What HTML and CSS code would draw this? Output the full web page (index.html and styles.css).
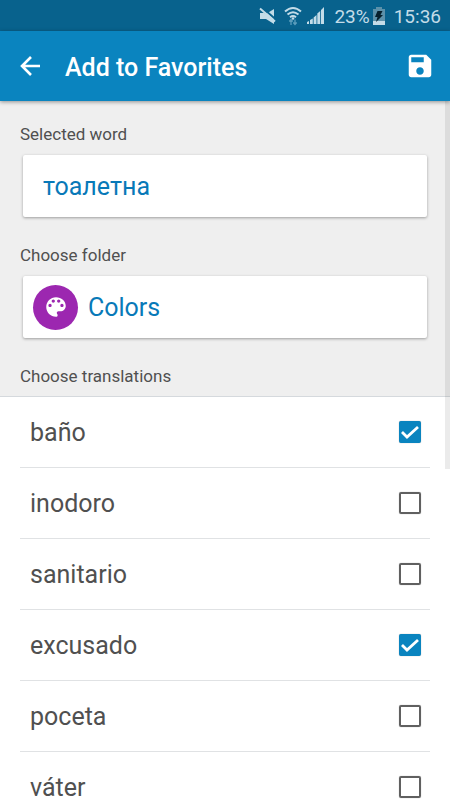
FILE: index.html
```html
<!DOCTYPE html>
<html lang="en">
<head>
<meta charset="utf-8">
<meta name="viewport" content="width=device-width, initial-scale=1">
<title>Add to Favorites</title>
<link rel="stylesheet" href="styles.css">
</head>
<body>
<div class="screen">
  <div class="status">
    <svg class="status-mute" width="18" height="18" viewBox="0 0 18 18" aria-hidden="true">
      <path d="M1 6h4l2 1 8-5v15l-8-5H1z" fill="currentColor"/>
      <path d="M2 -.500l16 14" stroke="#08628d" stroke-width="2"/>
      <path d="M1 1.500l15 13" stroke="currentColor" stroke-width="2"/>
    </svg>
    <svg class="status-wifi" width="18" height="20" viewBox="0 0 18 20" aria-hidden="true">
      <g fill="none" stroke="currentColor" stroke-width="2">
        <path d="M1 5.500Q9-1.500 17 5.500M3.500 8.500q5.500-4.500 11 0M6 11.200q3-2.400 6 0"/>
      </g>
      <circle cx="9" cy="12.500" r="1.300" fill="currentColor"/>
      <path d="M7 19v-5M5.300 15.500L7 13.500l1.700 2M11 13.500v5M9.300 16.500l1.700 2 1.700-2" fill="none" stroke="#5c9dbc" stroke-width="1.300"/>
    </svg>
    <svg class="status-signal" width="17" height="17" viewBox="0 0 17 17" aria-hidden="true">
      <path d="M0 17v-2l2-1v3zM3 17v-4l2.800-1.600V17zM6.600 17v-6.500L9.500 8v9zM10.300 17V6.500L13.200 4v13zM14 17V3l3-3v17z" fill="currentColor"/>
    </svg>
    <span class="status-percent">23%</span>
    <svg class="status-battery" width="12" height="18" viewBox="0 0 12 18" aria-hidden="true">
      <path d="M0 2h3V0h6v2h3v12H0z" fill="#5c91aa"/>
      <path d="M0 14h12v4H0z" fill="currentColor"/>
      <path d="M4.500 4h5L7.500 8H10l-7 7 1.500-5H2z" fill="#07202c"/>
    </svg>
    <span class="status-time">15:36</span>
  </div>
  <header class="toolbar">
    <button class="icon-button" type="button" aria-label="Back">
      <svg width="20" height="20" viewBox="0 0 20 20"><path d="M20 10H2M11 1l-9 9 9 9" fill="none" stroke="currentColor" stroke-width="2.600"/></svg>
    </button>
    <h1 class="title">Add to Favorites</h1>
    <button class="icon-button" type="submit" form="favorite" aria-label="Save">
      <svg width="30" height="30" viewBox="0 0 24 24"><path fill="currentColor" d="M17 3H5c-1.110 0-2 .900-2 2v14c0 1.100.890 2 2 2h14c1.100 0 2-.900 2-2V7l-4-4zm-5 16c-1.660 0-3-1.340-3-3s1.340-3 3-3 3 1.340 3 3-1.340 3-3 3zm3-10H5V5h10v4z"/></svg>
    </button>
  </header>
  <form class="content" id="favorite">
    <div class="fields">
      <div class="field">
        <label class="label" for="word">Selected word</label>
        <input class="card word" id="word" type="text" value="тоалетна" lang="bg">
      </div>
      <div class="field">
        <label class="label" for="folder">Choose folder</label>
        <button class="card folder" id="folder" type="button">
          <span class="folder-icon">
            <svg width="26" height="26" viewBox="0 0 24 24" aria-hidden="true"><path fill="currentColor" d="M12 3c-4.970 0-9 4.030-9 9s4.030 9 9 9c.830 0 1.500-.670 1.500-1.500 0-.390-.150-.740-.390-1.010-.230-.260-.380-.610-.380-.990 0-.830.670-1.500 1.500-1.500H16c2.760 0 5-2.240 5-5 0-4.420-4.030-8-9-8zm-5.500 9c-.830 0-1.500-.670-1.500-1.500S5.670 9 6.500 9 8 9.670 8 10.500 7.330 12 6.500 12zm3-4C8.670 8 8 7.330 8 6.500S8.670 5 9.500 5s1.500.670 1.500 1.500S10.330 8 9.500 8zm5 0c-.830 0-1.500-.670-1.500-1.500S13.670 5 14.500 5s1.500.670 1.500 1.500S15.330 8 14.500 8zm3 4c-.830 0-1.500-.670-1.500-1.500S16.670 9 17.500 9s1.500.670 1.500 1.500-.670 1.500-1.500 1.500z"/></svg>
          </span>
          <span>Colors</span>
        </button>
      </div>
      <h2 class="label">Choose translations</h2>
    </div>
    <ul class="translations" lang="es">
      <li class="row"><label class="option">baño<input class="check" type="checkbox" checked></label></li>
      <li class="row"><label class="option">inodoro<input class="check" type="checkbox"></label></li>
      <li class="row"><label class="option">sanitario<input class="check" type="checkbox"></label></li>
      <li class="row"><label class="option">excusado<input class="check" type="checkbox" checked></label></li>
      <li class="row"><label class="option">poceta<input class="check" type="checkbox"></label></li>
      <li class="row"><label class="option">váter<input class="check" type="checkbox"></label></li>
    </ul>
  </form>
  <div class="scroll-thumb"></div>
</div>
</body>
</html>
```
FILE: styles.css
```css
* {
  box-sizing: border-box;
}

body {
  margin: 0;
  background: #fff;
  color: #505050;
  font-family: Roboto, "Noto Sans", sans-serif;
}

button,
input {
  margin: 0;
  font: inherit;
}

.screen {
  position: relative;
  display: flex;
  flex-direction: column;
  height: 100vh;
  overflow: hidden;
}

.status {
  flex: none;
  display: flex;
  align-items: center;
  justify-content: flex-end;
  height: 31px;
  padding: 0 9px;
  background: #08628d;
  color: #c3dce8;
  font-size: 19px;
  line-height: 31px;
}

.status-wifi {
  margin-left: 7px;
}

.status-signal {
  margin-left: 5px;
}

.status-percent {
  margin: 2px 0 0 10px;
}

.status-battery {
  margin-left: 3px;
}

.status-time {
  margin: 2px 0 0 9px;
}

.toolbar {
  z-index: 1;
  flex: none;
  display: flex;
  align-items: center;
  height: 70px;
  padding: 0 10px;
  background: #0a84bf;
  box-shadow: 0 1px 4px rgba(0, 0, 0, 0.4);
  color: #fff;
}

.icon-button {
  display: grid;
  place-items: center;
  width: 40px;
  height: 40px;
  padding: 0;
  border: 0;
  background: none;
  color: inherit;
}

.title {
  flex: 1;
  margin: 3px 0 0 15px;
  font-size: 25px;
  font-weight: 500;
  line-height: 32px;
}

.content {
  flex: 1;
  min-height: 0;
  overflow-y: auto;
  scrollbar-width: none;
}

.fields {
  padding: 23px 20px 10px;
  border-bottom: 1px solid #d5d9dd;
  background: #efefef;
}

.field {
  margin-bottom: 28px;
}

.label {
  display: block;
  margin: 0;
  font-size: 17px;
  font-weight: 400;
  line-height: 20px;
}

.card {
  display: flex;
  align-items: center;
  width: calc(100% - 6px);
  height: 62px;
  margin: 11px 3px 0;
  border: 0;
  border-radius: 2px;
  background: #fff;
  box-shadow: 0 1px 3px rgba(0, 0, 0, 0.35);
  color: #0879b8;
  font-size: 25px;
}

.word {
  padding: 0 20px;
}

.folder {
  gap: 10px;
  padding: 0 10px;
  text-align: left;
}

.folder-icon {
  display: grid;
  place-items: center;
  width: 45px;
  height: 45px;
  border-radius: 50%;
  background: #9c27b0;
  color: #fff;
}

.translations {
  margin: 0;
  padding: 0 20px;
  list-style: none;
}

.row {
  border-bottom: 1px solid #e0e2e4;
}

.option {
  display: flex;
  align-items: center;
  justify-content: space-between;
  height: 70px;
  padding: 0 9px 0 10px;
  font-size: 25px;
}

.check {
  appearance: none;
  width: 22px;
  height: 22px;
  border: 2px solid #606060;
  border-radius: 2px;
  box-shadow: 0 0 1px rgba(0, 0, 0, 0.4);
}

.check:checked {
  border-color: #0a84bf;
  background: #0a84bf url("data:image/svg+xml,%3Csvg xmlns='http://www.w3.org/2000/svg' viewBox='0 0 18 18'%3E%3Cpath d='M1 9l5 5L17 4' fill='none' stroke='white' stroke-width='2.800'/%3E%3C/svg%3E") center / 18px 18px no-repeat;
}

.scroll-thumb {
  position: absolute;
  top: 101px;
  right: 0;
  width: 5px;
  height: 46%;
  background: rgba(0, 0, 0, 0.08);
  pointer-events: none;
}
```
